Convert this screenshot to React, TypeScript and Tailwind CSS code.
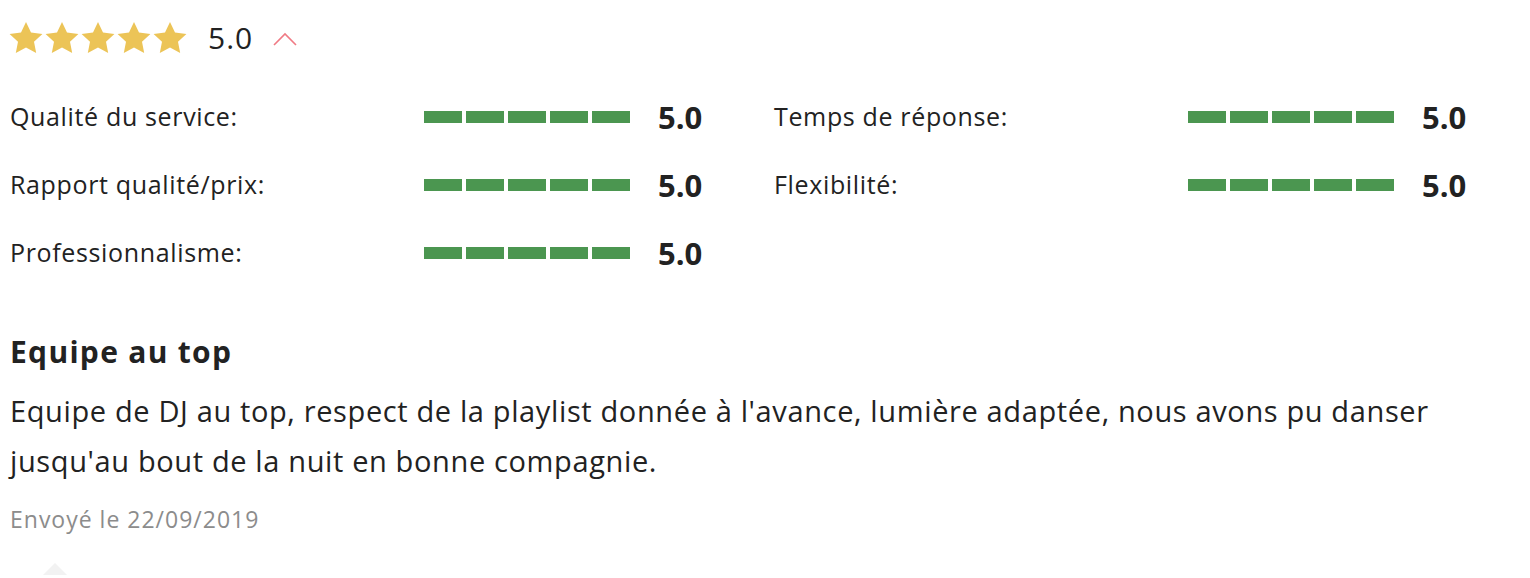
import React from "react";

const font = { fontFamily: '"Open Sans", "Liberation Sans", sans-serif' };

function Star() {
  return (
    <svg width="36" height="34" viewBox="0 0 36 34" className="block">
      <path
        d="M18 1l5 10.4 11.4 1.5-8.4 7.8 2.2 11.3L18 26.6 7.8 32l2.2-11.3-8.4-7.8 11.4-1.5z"
        fill="#ecc457"
      />
    </svg>
  );
}

function Bar() {
  return (
    <div className="flex gap-[4px]">
      {[0, 1, 2, 3, 4].map((i) => (
        <div key={i} className="w-[38px] h-[12px] bg-[#4b9650]" />
      ))}
    </div>
  );
}

function Row({ label }: { label: string }) {
  return (
    <div className="flex items-center h-[68px]">
      <div className="w-[414px] text-[25px] tracking-[0.65px] text-[#222]">{label}</div>
      <Bar />
      <div className="ml-[28px] text-[31px] font-bold text-[#222]">5.0</div>
    </div>
  );
}

export default function App() {
  return (
    <div className="bg-white w-[1530px] h-[578px] overflow-hidden text-[#222]" style={font}>
      <div className="pl-[9px] pt-[21px] flex items-center h-[55px]">
        <div className="flex items-center -ml-[1px]">
          <Star />
          <Star />
          <Star />
          <Star />
          <Star />
        </div>
        <span className="ml-[20px] text-[30px] tracking-[1px] leading-none">5.0</span>
        <svg width="26" height="16" viewBox="0 0 26 16" className="ml-[19px] mt-[2px]">
          <path d="M2 14L13 3l11 11" fill="none" stroke="#f07a84" strokeWidth="1.6" />
        </svg>
      </div>
      <div className="pl-[10px] mt-[28px] grid grid-cols-[764px_764px]">
        <Row label="Qualité du service:" />
        <Row label="Temps de réponse:" />
        <Row label="Rapport qualité/prix:" />
        <Row label="Flexibilité:" />
        <Row label="Professionnalisme:" />
      </div>
      <div className="pl-[10px]">
        <h2 className="mt-[45px] text-[30px] tracking-[1.3px] leading-[40px] font-bold">Equipe au top</h2>
        <p className="mt-[14px] text-[29px] tracking-[0.63px] leading-[50px] w-[1480px]">
          Equipe de DJ au top, respect de la playlist donnée à l'avance, lumière adaptée, nous avons pu danser jusqu'au bout de la nuit en bonne compagnie.
        </p>
        <div className="mt-[18px] text-[23px] tracking-[1px] leading-[30px] text-[#8c8c8c]">Envoyé le 22/09/2019</div>
        <div className="ml-[33px] mt-[29px] w-0 h-0 border-l-[12px] border-r-[12px] border-b-[12px] border-l-transparent border-r-transparent border-b-[#f2f2f2]" />
      </div>
    </div>
  );
}
